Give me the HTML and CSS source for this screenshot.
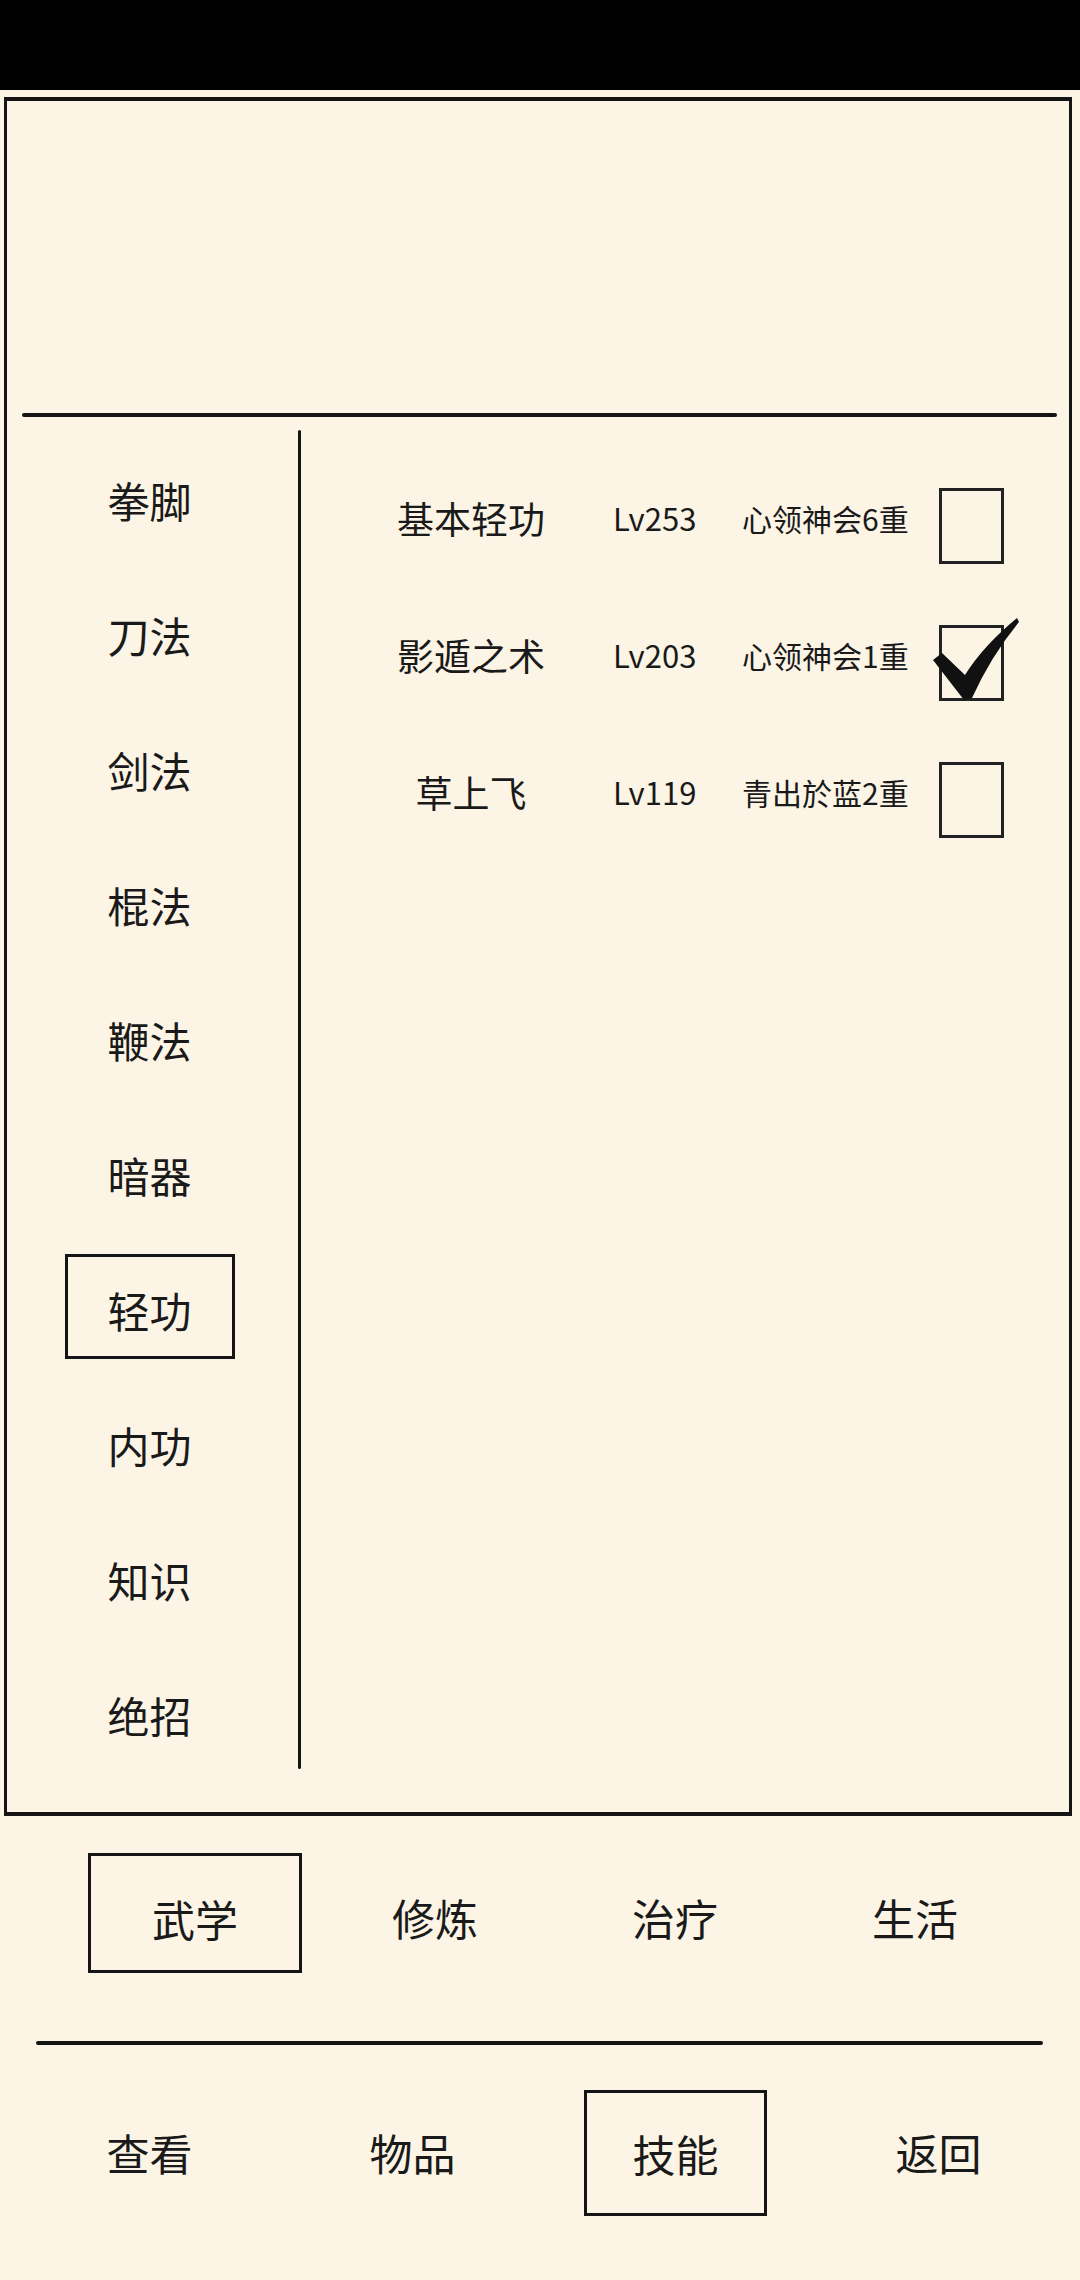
FILE: index.html
```html
<!DOCTYPE html>
<html lang="zh">
<head>
<meta charset="utf-8">
<link rel="stylesheet" href="styles.css">
</head>
<body>
<div class="statusbar"></div>
<div class="panel">
  <div class="panel-top"></div>
  <div class="divider-top"></div>
  <div class="panel-body">
    <ul class="menu">
      <li class="menu-item"><span>拳脚</span></li>
      <li class="menu-item"><span>刀法</span></li>
      <li class="menu-item"><span>剑法</span></li>
      <li class="menu-item"><span>棍法</span></li>
      <li class="menu-item"><span>鞭法</span></li>
      <li class="menu-item"><span>暗器</span></li>
      <li class="menu-item active"><span>轻功</span></li>
      <li class="menu-item"><span>内功</span></li>
      <li class="menu-item"><span>知识</span></li>
      <li class="menu-item"><span>绝招</span></li>
    </ul>
    <div class="vline"></div>
    <div class="skills">
      <div class="skill-row">
        <span class="skill-name">基本轻功</span>
        <span class="skill-lv">Lv253</span>
        <span class="skill-state">心领神会6重</span>
        <span class="check"></span>
      </div>
      <div class="skill-row">
        <span class="skill-name">影遁之术</span>
        <span class="skill-lv">Lv203</span>
        <span class="skill-state">心领神会1重</span>
        <span class="check checked">
          <svg class="tick" viewBox="0 0 90 90" width="90" height="90">
            <path d="M2 44 L11 37 L34 59 Q52 30 86 2 L88 6 Q60 40 41 82 L33 84 Z" fill="#111"/>
          </svg>
        </span>
      </div>
      <div class="skill-row">
        <span class="skill-name">草上飞</span>
        <span class="skill-lv">Lv119</span>
        <span class="skill-state">青出於蓝2重</span>
        <span class="check"></span>
      </div>
    </div>
  </div>
</div>
<div class="tabs">
  <div class="tab"><span class="boxed wide">武学</span></div>
  <div class="tab"><span>修炼</span></div>
  <div class="tab"><span>治疗</span></div>
  <div class="tab"><span>生活</span></div>
</div>
<div class="divider-bottom"></div>
<div class="nav">
  <div class="nav-item"><span>查看</span></div>
  <div class="nav-item"><span>物品</span></div>
  <div class="nav-item"><span class="boxed narrow">技能</span></div>
  <div class="nav-item"><span>返回</span></div>
</div>
</body>
</html>
```

FILE: styles.css
```css
* { box-sizing: border-box; }
html, body {
  margin: 0;
  padding: 0;
  background: #fcf5e5;
  color: #1a1a1a;
  font-family: "Noto Sans CJK SC", "Noto Sans", sans-serif;
}
body {
  width: 1080px;
  height: 2280px;
  overflow: hidden;
}
.statusbar {
  height: 90px;
  background: #000;
}
.panel {
  margin: 7px 8px 0 4px;
  height: 1719px;
  border-top: 4px solid #151515;
  border-left: 3px solid #151515;
  border-right: 3px solid #151515;
  border-bottom: 4px solid #151515;
  display: flex;
  flex-direction: column;
}
.panel-top {
  height: 312px;
}
.divider-top {
  height: 4px;
  margin: 0 12px 0 15px;
  background: #151515;
  border-radius: 2px;
}
.panel-body {
  flex: 1;
  display: flex;
}
.menu {
  list-style: none;
  margin: 0;
  padding: 15px 0 0 0;
  width: 291px;
}
.menu-item {
  height: 135px;
  display: flex;
  align-items: center;
  justify-content: center;
  font-size: 42px;
  line-height: 1;
  padding-right: 6px;
}
.menu-item.active span {
  border: 3px solid #151515;
  width: 170px;
  height: 105px;
  display: flex;
  align-items: center;
  justify-content: center;
  padding-top: 6px;
  margin-top: -6px;
}
.vline {
  width: 3px;
  background: #151515;
  margin: 13px 0 43px 0;
  border-radius: 2px;
}
.skills {
  flex: 1;
  padding: 32px 0 0 90px;
}
.skill-row {
  height: 137px;
  display: grid;
  grid-template-columns: 222px 129px 197px 65px;
  align-items: center;
}
.skill-name {
  font-size: 37px;
  text-align: center;
  padding-right: 62px;
}
.skill-lv {
  font-size: 31px;
}
.skill-state {
  font-size: 30px;
}
.check {
  width: 65px;
  height: 76px;
  border: 3px solid #222;
  margin-top: 16px;
  position: relative;
}
.tick {
  position: absolute;
  left: -11px;
  top: -12px;
}
.tabs {
  margin: 37px 0 0 75px;
  display: grid;
  grid-template-columns: repeat(4, 240px);
  height: 120px;
}
.tab, .nav-item {
  display: flex;
  align-items: center;
  justify-content: center;
  font-size: 43px;
  line-height: 1;
}
.tab span { margin-top: 8px; }
.boxed {
  border: 3px solid #151515;
  display: flex;
  align-items: center;
  justify-content: center;
}
.boxed.wide {
  width: 214px;
  height: 120px;
  margin-top: 0 !important;
  padding-top: 10px;
}
.divider-bottom {
  height: 4px;
  margin: 68px 37px 0 36px;
  background: #151515;
  border-radius: 2px;
}
.nav {
  margin: 45px 0 0 18px;
  display: grid;
  grid-template-columns: repeat(4, 263px);
  height: 126px;
}
.nav-item > span { margin-top: -2px; }
.boxed.narrow {
  width: 183px;
  height: 126px;
  margin-top: 0 !important;
}
```
